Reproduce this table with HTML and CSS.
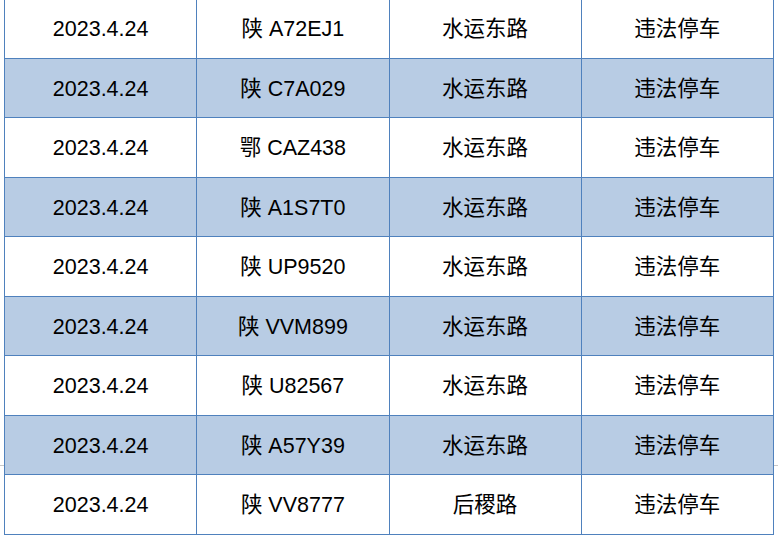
FILE: index.html
```html
<!DOCTYPE html>
<html>
<head>
<meta charset="utf-8">
<link rel="stylesheet" href="styles.css">
</head>
<body>
<div class="page">
<div class="rule"></div>
<table class="grid">
<colgroup><col class="c"><col class="c"><col class="c"><col class="c"></colgroup>
<tr><td>2023.4.24</td><td>陕 A72EJ1</td><td>水运东路</td><td>违法停车</td></tr>
<tr class="alt"><td>2023.4.24</td><td>陕 C7A029</td><td>水运东路</td><td>违法停车</td></tr>
<tr><td>2023.4.24</td><td>鄂 CAZ438</td><td>水运东路</td><td>违法停车</td></tr>
<tr class="alt"><td>2023.4.24</td><td>陕 A1S7T0</td><td>水运东路</td><td>违法停车</td></tr>
<tr><td>2023.4.24</td><td>陕 UP9520</td><td>水运东路</td><td>违法停车</td></tr>
<tr class="alt"><td>2023.4.24</td><td>陕 VVM899</td><td>水运东路</td><td>违法停车</td></tr>
<tr><td>2023.4.24</td><td>陕 U82567</td><td>水运东路</td><td>违法停车</td></tr>
<tr class="alt"><td>2023.4.24</td><td>陕 A57Y39</td><td>水运东路</td><td>违法停车</td></tr>
<tr><td>2023.4.24</td><td>陕 VV8777</td><td>后稷路</td><td>违法停车</td></tr>
</table>
</div>
</body>
</html>
```
FILE: styles.css
```css
html, body {
  margin: 0;
  padding: 0;
  background: #ffffff;
  overflow: hidden;
}
.page {
  position: relative;
  width: 778px;
  height: 538px;
  overflow: hidden;
}
.rule {
  position: absolute;
  left: 0;
  right: 0;
  top: 465px;
  height: 1px;
  background: #c8c8c8;
}
.grid {
  position: relative;
  margin: -2px 0 0 4px;
  border-collapse: collapse;
  table-layout: fixed;
  width: 770px;
  font-family: "Liberation Sans", "Noto Sans CJK SC", sans-serif;
  font-size: 21.5px;
  color: #000000;
}
.grid col.c {
  width: 25%;
}
.grid td {
  border: 1px solid #4f81bd;
  height: 56.5px;
  padding: 2px 0 0 0;
  line-height: 24px;
  text-align: center;
  vertical-align: middle;
  background: #ffffff;
}
.grid tr.alt td {
  background: #b8cce4;
}
```
